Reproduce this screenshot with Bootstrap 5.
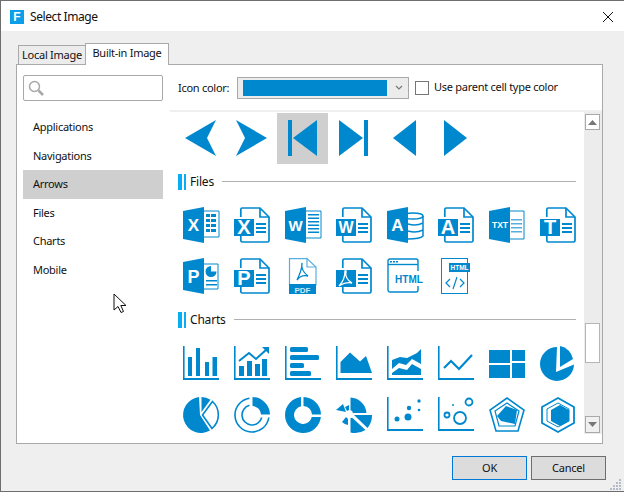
<!DOCTYPE html>
<html lang="en">
<head>
<meta charset="utf-8">
<title>Select Image</title>
<link href="https://cdn.jsdelivr.net/npm/bootstrap@5.3.0/dist/css/bootstrap.min.css" rel="stylesheet">
<style>
html,body{height:493px;overflow:hidden;background:#fff}
body{font-family:"Noto Sans","Open Sans",sans-serif;font-size:11px;letter-spacing:-.27px;color:#111;line-height:1.3}
.win{width:624px;height:492px;border:1px solid #6e6e6e;border-right:0;background:#efefef;position:relative}
.ttl{height:30px;background:#fff;padding:1px 0 0 9px}
.ttl-logo{width:14px;height:14px;background:#0a9fe8;color:#fff;font:700 12px/14px "Liberation Sans",sans-serif;letter-spacing:0;text-align:center;margin-right:6px}
.ttl-text{font-size:12px;letter-spacing:-.42px}
.ttl-x{margin-left:auto;margin-right:9px;width:14px;height:14px}
.tabs-wrap{padding:12px 0 0 17px;height:33px}
.tabs-wrap .nav-link{padding:0;border:1px solid #a9a9a9;border-bottom:0;border-radius:0;color:#111;font-size:11px;text-align:center}
.tab-off{width:68px;height:20px;margin-top:2px}
.tab-on{width:84px;height:22px;margin-left:-1px;position:relative;z-index:2;margin-bottom:-1px}
.tabs-wrap .nav-link.tab-off{background:#ececec;line-height:17px}
.tabs-wrap .nav-link.tab-on{background:#fff;line-height:18px;color:#111}
.pane{margin-left:15px;width:587px;height:380px;background:#fff;border:1px solid #a9a9a9}
.side{width:153px;padding:10px 7px 0 6px;flex:none}
.srch{height:26px;border:1px solid #a9a9a9;border-radius:2px;margin-bottom:12px;padding-left:3px;background:#fff}
.cat{background:none;border:0;padding:0 10px;height:28.6px;line-height:27px;color:#111;font-size:11px;border-radius:0!important}
.cat.list-group-item.sel,.cat.sel{background:#cfcfcf;color:#111}
.main{flex:1;min-width:0}
.bar{height:47px;border-bottom:2px solid #efefef;padding:12px 0 0 8px;flex:none}
.lbl{width:59px;padding-top:4px}
.pick{width:172px;height:22px;border:1px solid #a9a9a9;background:#ececec;padding:2px 2px 2px 5px;flex:none}
.pick-fill{width:144px;height:16px;background:#0088cf;margin-right:8px}
.pick-arr{width:8px;height:6px}
.chk{width:14px;height:14px;margin:4px 5px 0 6px;border:1px solid #767676;background:#fff;border-radius:0;flex:none}
.chk-lbl{padding-top:3px}
.view{height:331px;overflow:hidden}
.icons{width:414px;padding-left:5px;flex:none;overflow:hidden;height:331px;padding-top:1px}
.cellrow{height:51px}
.cellbox{width:51px;height:51px;padding:7px 7px 8px 8px;flex:none}
.cellbox.sel{background:#cfcfcf}
.cellbox svg{display:block;width:36px;height:36px;overflow:visible}
.hd{height:16px;margin:10px 8px 10px 3px;font-size:12px;letter-spacing:-.2px}
.hd-gap{margin-bottom:11px}
.hd-bars{width:8px;height:16px;margin-right:4px;background:linear-gradient(90deg,#08aef5 0 4px,#fff 4px 6px,#08aef5 6px 8px)}
.hd-line{height:1px;background:#b0b0b0;flex:1;margin-left:8px;margin-bottom:1px}
.sb{width:18px;margin-left:auto;margin-right:0;height:322px;background:#ececec;flex:none;padding:2px 2px 0 1px}
.sb-btn{height:16px;border:1px solid #a9a9a9;background:#fff;width:15px}
.sb-btn.dn{background:#f0f0f0;height:17px}
.sb-thumb{height:40px;width:15px;border:1px solid #b5b5b5;background:#fff;margin-top:193px;margin-bottom:53px}
.foot{padding:12px 18px 0 0;position:relative;height:47px}
.foot .btn{width:75px;height:24px;padding:0;font-size:11px;letter-spacing:-.2px;color:#111;background:#dcdcdc;border:1px solid #6e6e6e;border-radius:0;margin-left:4px}
.foot .btn.ok{border-color:#0078d7}
.grip{position:absolute;right:2px;bottom:0;width:12px;height:12px}
.cursor{position:absolute;left:112px;top:292px;width:14px;height:21px}
.ic{fill:#0088cf}
svg text{letter-spacing:0}
</style>
</head>
<body>
<svg width="0" height="0" class="position-absolute">
<defs>
<g id="docb">
<path d="M6.800 10V2.500a1.500 1.500 0 0 1 1.500-1.500H26l9 9v23.500a1.500 1.500 0 0 1-1.500 1.500H8.300a1.500 1.500 0 0 1-1.500-1.500V29" fill="none" stroke="#0088cf" stroke-width="1.700"/>
<path d="M26 1v9h9" fill="none" stroke="#0088cf" stroke-width="1.700"/>
<rect y="12" width="20" height="17" fill="#0088cf"/>
<path d="M22 16h10v2H22zM22 20h10v2H22zM22 24h10v2H22z" fill="#0088cf"/>
</g>
<path id="leaf" d="M0 4 21 0V36L0 32Z" fill="#0088cf"/>
<path id="axis" d="M0 0h1.600V32H36v2H0Z" fill="#0088cf"/>
</defs>
</svg>

<div class="win d-flex flex-column">
  <div class="ttl d-flex align-items-center">
    <span class="ttl-logo">F</span><span class="ttl-text">Select Image</span>
    <svg class="ttl-x" viewBox="0 0 14 14"><path d="M2 2 12 12M12 2 2 12" stroke="#111" stroke-width="1" fill="none"/></svg>
  </div>
  <div class="tabs-wrap">
    <ul class="nav border-0 align-items-start">
      <li class="nav-item"><a class="nav-link tab-off" href="#">Local Image</a></li>
      <li class="nav-item"><a class="nav-link tab-on" href="#">Built-in Image</a></li>
    </ul>
  </div>
  <div class="pane d-flex">
    <div class="side">
      <div class="srch d-flex align-items-center">
        <svg width="18" height="18" viewBox="0 0 18 18"><circle cx="7.500" cy="7.500" r="5" fill="none" stroke="#a8a8a8" stroke-width="1.500"/><path d="M11.500 11.500 16 16" stroke="#a8a8a8" stroke-width="2.500"/></svg>
      </div>
      <div class="list-group">
        <div class="list-group-item cat">Applications</div>
        <div class="list-group-item cat">Navigations</div>
        <div class="list-group-item cat sel">Arrows</div>
        <div class="list-group-item cat">Files</div>
        <div class="list-group-item cat">Charts</div>
        <div class="list-group-item cat">Mobile</div>
      </div>
    </div>
    <div class="main d-flex flex-column">
      <div class="bar d-flex align-items-start">
        <span class="lbl">Icon color:</span>
        <div class="pick d-flex align-items-center"><div class="pick-fill"></div>
          <svg class="pick-arr" viewBox="0 0 8 6"><path d="M1 1 4 4 7 1" fill="none" stroke="#777" stroke-width="1.200"/></svg>
        </div>
        <span class="chk"></span><span class="chk-lbl">Use parent cell type color</span>
      </div>
      <div class="view d-flex">
        <div class="icons">
          <div class="cellrow d-flex">
            <div class="cellbox"><svg viewBox="0 0 36 36"><path class="ic" d="M2 18 33 0 24 18 33 36Z"/></svg></div>
            <div class="cellbox"><svg viewBox="0 0 36 36"><path class="ic" d="M2 0 33 18 2 36 11 18Z"/></svg></div>
            <div class="cellbox sel"><svg viewBox="0 0 36 36"><path class="ic" d="M3 0h4V36H3zM8 18 32 0V36Z"/></svg></div>
            <div class="cellbox"><svg viewBox="0 0 36 36"><path class="ic" d="M3 0 27 18 3 36ZM28 0h4V36H28Z"/></svg></div>
            <div class="cellbox"><svg viewBox="0 0 36 36"><path class="ic" d="M6 18 29 0V36Z"/></svg></div>
            <div class="cellbox"><svg viewBox="0 0 36 36"><path class="ic" d="M6 0 29 18 6 36Z"/></svg></div>
          </div>

          <div class="hd d-flex align-items-center"><span class="hd-bars"></span><span>Files</span><span class="hd-line"></span></div>

          <div class="cellrow d-flex">
            <div class="cellbox"><svg viewBox="0 0 36 36"><use href="#leaf"/><text x="10.500" y="24" text-anchor="middle" font-family="Liberation Sans" font-weight="700" font-size="17" fill="#fff">X</text><path d="M21 4h15v26H21" fill="none" stroke="#0088cf" stroke-width="1"/><path d="M23 7h4v3h-4zM28 7h5v3h-5zM23 12h4v3h-4zM28 12h5v3h-5zM23 17h4v3h-4zM28 17h5v3h-5zM23 22h4v3h-4zM28 22h5v3h-5z" fill="#0088cf"/></svg></div>
            <div class="cellbox"><svg viewBox="0 0 36 36"><use href="#docb"/><text x="10" y="26.500" text-anchor="middle" font-family="Liberation Sans" font-weight="700" font-size="20" fill="#fff">X</text></svg></div>
            <div class="cellbox"><svg viewBox="0 0 36 36"><use href="#leaf"/><text x="10.500" y="23.500" text-anchor="middle" font-family="Liberation Sans" font-weight="700" font-size="15" fill="#fff">W</text><path d="M21 4h15v27H21" fill="none" stroke="#0088cf" stroke-width="1"/><path d="M23 7h11v1.500H23zM23 10.500h11V12H23zM23 14h11v1.500H23zM23 17.500h11V19H23zM23 21h11v1.500H23zM23 24.500h11V26H23z" fill="#0088cf"/></svg></div>
            <div class="cellbox"><svg viewBox="0 0 36 36"><use href="#docb"/><text x="10" y="26" text-anchor="middle" font-family="Liberation Sans" font-weight="700" font-size="16" fill="#fff">W</text></svg></div>
            <div class="cellbox"><svg viewBox="0 0 36 36"><use href="#leaf"/><text x="10.500" y="24" text-anchor="middle" font-family="Liberation Sans" font-weight="700" font-size="17" fill="#fff">A</text><g fill="none" stroke="#0088cf" stroke-width="1.500"><ellipse cx="26" cy="9" rx="10" ry="3"/><path d="M21 17c5 1.500 10 1.500 15-1M21 24c5 1.500 10 1.500 15-1M36 9V29c-2 2-9 3-15 3"/></g></svg></div>
            <div class="cellbox"><svg viewBox="0 0 36 36"><use href="#docb"/><text x="10" y="27" text-anchor="middle" font-family="Liberation Sans" font-weight="700" font-size="20" fill="#fff">A</text></svg></div>
            <div class="cellbox"><svg viewBox="0 0 36 36"><use href="#leaf"/><text x="11" y="21" text-anchor="middle" font-family="Liberation Sans" font-weight="700" font-size="8.500" fill="#fff">TXT</text><path d="M21 4h14v28H21" fill="none" stroke="#0088cf" stroke-width="1"/><path d="M22 12h11v1.500H22zM22 16h11v1.500H22zM22 20h11v1.500H22zM22 24h11v1.500H22z" fill="#58aede"/></svg></div>
            <div class="cellbox"><svg viewBox="0 0 36 36"><use href="#docb"/><text x="10" y="27" text-anchor="middle" font-family="Liberation Sans" font-weight="700" font-size="20" fill="#fff">T</text></svg></div>
          </div>
          <div class="cellrow d-flex">
            <div class="cellbox"><svg viewBox="0 0 36 36"><use href="#leaf"/><text x="10.500" y="24.500" text-anchor="middle" font-family="Liberation Sans" font-weight="700" font-size="18" fill="#fff">P</text><path d="M21 6h14v25H21" fill="none" stroke="#0088cf" stroke-width="1"/><path d="M28 8a5.500 5.500 0 1 0 5.500 5.500H28Z" fill="#0088cf"/><path d="M23 22h11v1.500H23zM23 26h11v1.500H23z" fill="#0088cf"/></svg></div>
            <div class="cellbox"><svg viewBox="0 0 36 36"><use href="#docb"/><text x="10" y="27" text-anchor="middle" font-family="Liberation Sans" font-weight="700" font-size="20" fill="#fff">P</text></svg></div>
            <div class="cellbox"><svg viewBox="0 0 36 36"><path d="M4.500 .6H22L31 9V27H4.500Z" fill="none" stroke="#58aede" stroke-width="1.200"/><path d="M22 .6V9H31" fill="none" stroke="#58aede" stroke-width="1.200"/><rect x="4" y="26" width="27" height="10" fill="#0088cf"/><text x="17.500" y="34.500" text-anchor="middle" font-family="Liberation Sans" font-weight="700" font-size="8" fill="#cfe8f7">PDF</text><path d="M17 5c-1 5 2 10 6 13-4-1-8 0-11 4 2-4 5-10 5-17Z" fill="none" stroke="#0088cf" stroke-width="1.300"/></svg></div>
            <div class="cellbox"><svg viewBox="0 0 36 36"><use href="#docb"/><path d="M10 13c-1 5 1 9 6 12-4-1-8 0-13 3 3-3 6-9 6-15Z" fill="none" stroke="#fff" stroke-width="1.300"/></svg></div>
            <div class="cellbox"><svg viewBox="0 0 36 36"><rect x="1" y="1" width="30" height="33" rx="2" fill="none" stroke="#0088cf" stroke-width="1.400"/><path d="M1 6.500H31" stroke="#0088cf" stroke-width="1.400"/><path d="M3 3h2v1.500H3zM6 3h2v1.500H6zM9 3h2v1.500H9z" fill="#0088cf"/><rect x="9" y="13" width="27" height="15" fill="#fff"/><text x="22" y="25" text-anchor="middle" font-family="Liberation Sans" font-weight="700" font-size="10" fill="#0088cf">HTML</text></svg></div>
            <div class="cellbox"><svg viewBox="0 0 36 36"><rect x="3.500" y="0.500" width="26" height="35" fill="none" stroke="#0088cf" stroke-width="1"/><rect x="11" y="5" width="21" height="9" fill="#0088cf"/><text x="21.500" y="12" text-anchor="middle" font-family="Liberation Sans" font-weight="700" font-size="6.500" fill="#fff">HTML</text><path d="M12 21 8 25 12 29M22 21 26 25 22 29M19 19 15 31" fill="none" stroke="#0088cf" stroke-width="1.200"/></svg></div>
          </div>

          <div class="hd hd-gap d-flex align-items-center"><span class="hd-bars"></span><span>Charts</span><span class="hd-line"></span></div>

          <div class="cellrow d-flex">
            <div class="cellbox"><svg viewBox="0 0 36 36"><use href="#axis"/><path d="M5 11h4v19H5zM13 2h4v28h-4zM22 16h4v14h-4zM29.500 11h4.500v19h-4.500z" fill="#0088cf"/></svg></div>
            <div class="cellbox"><svg viewBox="0 0 36 36"><use href="#axis"/><path d="M5 20h5v10H5zM13 15h5v15h-5zM21 18h5v12h-5zM28 13h5v17h-5z" fill="#0088cf"/><path d="M5 15 15 7 22 13 33 3" fill="none" stroke="#0088cf" stroke-width="2"/><path d="M28 1h7v7Z" fill="#0088cf"/></svg></div>
            <div class="cellbox"><svg viewBox="0 0 36 36"><use href="#axis"/><rect x="5" y="1" width="18" height="5" rx="1.500" fill="#0088cf"/><rect x="5" y="9" width="29" height="5" rx="1.500" fill="#0088cf"/><rect x="5" y="17" width="14" height="5" rx="1.500" fill="#0088cf"/><rect x="5" y="25" width="21" height="5" rx="1.500" fill="#0088cf"/></svg></div>
            <div class="cellbox"><svg viewBox="0 0 36 36"><use href="#axis"/><path d="M4.500 27V16L14 6.500 24 15.500 30 10 36 27Z" fill="#0088cf"/></svg></div>
            <div class="cellbox"><svg viewBox="0 0 36 36"><use href="#axis"/><path d="M5 14 13 11 20 12 30 7 34 3V18L25 13 19 19 12 17 5 23Z" fill="#0088cf"/><path d="M5 27 12 22 20 24 25 18 34 23V29H5Z" fill="#0088cf"/></svg></div>
            <div class="cellbox"><svg viewBox="0 0 36 36"><use href="#axis"/><path d="M6 22 13 15 21 23 34 9" fill="none" stroke="#0088cf" stroke-width="2.200"/></svg></div>
            <div class="cellbox"><svg viewBox="0 0 36 36"><path d="M0 4H21V17H0ZM23 4H36V15H23ZM0 19H21V32H0ZM23 17H36V32H23Z" fill="#0088cf"/></svg></div>
            <div class="cellbox"><svg viewBox="0 0 36 36"><path d="M17 1a17 17 0 1 0 17 17.500L16 26 17 1Z" fill="#0088cf"/><path d="M20 0A16 16 0 0 1 33 13L20 21Z" fill="#0088cf"/></svg></div>
          </div>
          <div class="cellrow d-flex">
            <div class="cellbox"><svg viewBox="0 0 36 36"><path d="M16 .1A18 18 0 1 0 27 33.600L17 18Z" fill="#0088cf"/><path d="M18.500 0A18 18 0 0 1 27.500 2.700L18.500 15Z" fill="#0088cf"/><path d="M29.500 4.500A18 18 0 0 1 29 31.500L19.500 18Z" fill="none" stroke="#0088cf" stroke-width="1.600"/></svg></div>
            <div class="cellbox"><svg viewBox="0 0 36 36"><path d="M18.500 0A18 18 0 0 1 36 17.500H27A9 9 0 0 0 18.500 9Z" fill="#0088cf"/><path d="M15.500 1.200A17 17 0 1 0 34.800 20.500" fill="none" stroke="#0088cf" stroke-width="1.600"/><path d="M15.500 8.300A10 10 0 1 0 27.700 20.500" fill="none" stroke="#0088cf" stroke-width="1.600"/></svg></div>
            <div class="cellbox"><svg viewBox="0 0 36 36"><path d="M16 .1A18 18 0 1 0 35.900 20H26.800A9 9 0 1 1 16 9.200Z" fill="#0088cf"/><path d="M18.500 0A18 18 0 0 1 36 17.500H27A9 9 0 0 0 18.500 9Z" fill="#0088cf"/></svg></div>
            <div class="cellbox"><svg viewBox="0 0 36 36"><path d="M14.500 .5A17 17 0 0 1 30.500 16H17A4 4 0 0 0 14.500 13Z" fill="#0088cf"/><path d="M18 18H36A20 20 0 0 1 31.500 31Z" fill="#0088cf"/><path d="M16.500 21 29.500 33A20 20 0 0 1 14.500 35.500V21Z" fill="#0088cf"/><path d="M12 22V28A12 12 0 0 1 6 25L10 20Z" fill="#0088cf"/><path d="M0 13 7 7 10 15Z" fill="#0088cf"/><path d="M9 10 13 8V13L11 14Z" fill="#0088cf"/></svg></div>
            <div class="cellbox"><svg viewBox="0 0 36 36"><use href="#axis"/><circle cx="10" cy="22" r="2.500" fill="#0088cf"/><circle cx="21" cy="20" r="3.500" fill="#0088cf"/><circle cx="22" cy="11" r="2.200" fill="#0088cf"/><circle cx="32" cy="4" r="1.700" fill="#0088cf"/><circle cx="32" cy="13" r="1.300" fill="#0088cf"/></svg></div>
            <div class="cellbox"><svg viewBox="0 0 36 36"><use href="#axis"/><circle cx="9" cy="18" r="2.500" fill="none" stroke="#0088cf" stroke-width="1.800"/><circle cx="22" cy="21" r="6" fill="none" stroke="#0088cf" stroke-width="1.800"/><circle cx="31" cy="5" r="3.500" fill="none" stroke="#0088cf" stroke-width="1.800"/><circle cx="15" cy="8" r="1" fill="#0088cf"/></svg></div>
            <div class="cellbox"><svg viewBox="0 0 36 36"><path d="M18 1 35 13 29 34H7L1 13Z" fill="none" stroke="#0088cf" stroke-width="1.600"/><path d="M18 6 30 14 26 29H10L6 14Z" fill="none" stroke="#0088cf" stroke-width="1.200"/><path d="M17 9 28 13 26 27 12 24 8 19Z" fill="#0088cf"/></svg></div>
            <div class="cellbox"><svg viewBox="0 0 36 36"><path d="M18 1 34 10V26L18 35 2 26V10Z" fill="none" stroke="#0088cf" stroke-width="1.800"/><path d="M18 6 29 12V24L18 30 7 24V12Z" fill="none" stroke="#0088cf" stroke-width="1"/><path d="M20 8 29 13V24L20 29 11 24V13Z" fill="#0088cf"/></svg></div>
          </div>
        </div>
        <div class="sb d-flex flex-column">
          <div class="sb-btn d-flex align-items-center justify-content-center"><svg width="9" height="5" viewBox="0 0 9 5"><path d="M4.500 0 9 5H0Z" fill="#777"/></svg></div>
          <div class="sb-thumb"></div>
          <div class="sb-btn dn d-flex align-items-center justify-content-center"><svg width="9" height="5" viewBox="0 0 9 5"><path d="M4.500 5 9 0H0Z" fill="#777"/></svg></div>
        </div>
      </div>
    </div>
  </div>
  <div class="foot d-flex justify-content-end align-items-start">
    <button type="button" class="btn ok">OK</button>
    <button type="button" class="btn">Cancel</button>
    <svg class="grip" viewBox="0 0 12 12"><path d="M9 0h2v2H9zM6 3h2v2H6zM9 3h2v2H9zM3 6h2v2H3zM6 6h2v2H6zM9 6h2v2H9zM0 9h2v2H0zM3 9h2v2H3zM6 9h2v2H6zM9 9h2v2H9z" fill="#b4bccb"/></svg>
  </div>
  <svg class="cursor" viewBox="0 0 14 21"><path d="M1 1V17L5 13.500 8 19.500 10.500 18.500 7.800 12.500H13Z" fill="#fff" stroke="#111" stroke-width="1"/></svg>
</div>
</body>
</html>
